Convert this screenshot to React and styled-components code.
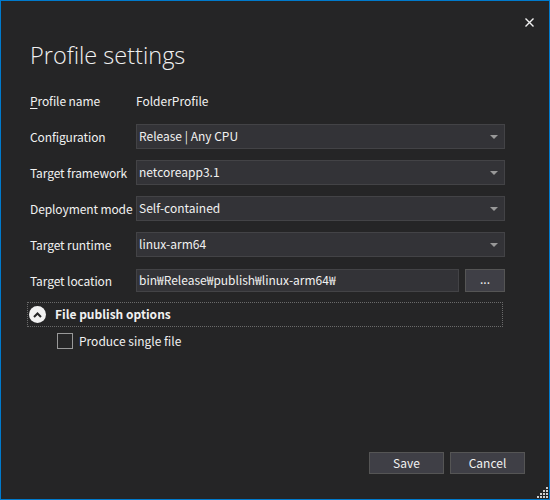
import styled, { createGlobalStyle } from "styled-components";

const GlobalStyle = createGlobalStyle`
  html, body {
    margin: 0;
    padding: 0;
    background: #252526;
  }
  * {
    box-sizing: border-box;
  }
`;

const Window = styled.div`
  position: relative;
  width: 550px;
  height: 500px;
  border: 1px solid #007acc;
  background: #252526;
  color: #f1f1f1;
  font-family: "Noto Sans CJK KR", "Noto Sans", sans-serif;
  font-size: 12px;
  display: flex;
  flex-direction: column;
`;

const Header = styled.div`
  display: flex;
  justify-content: flex-end;
  padding: 14px 15px 0 0;
  height: 24px;
`;

const CloseButton = styled.button`
  width: 9px;
  height: 9px;
  padding: 0;
  border: none;
  background: none;
  cursor: pointer;
  display: block;
`;

const Title = styled.h1`
  margin: 0;
  padding: 13px 0 0 29px;
  font-family: "Open Sans", "Liberation Sans", sans-serif;
  font-weight: 300;
  font-size: 23.5px;
  line-height: 34px;
  color: #f1f1f1;
`;

const Content = styled.div`
  flex: 1;
  padding: 16px 44px 0 29px;
`;

const Form = styled.div`
  display: grid;
  grid-template-columns: 106px 1fr;
  grid-auto-rows: 25px;
  row-gap: 11px;
  align-items: center;
`;

const Label = styled.label`
  white-space: nowrap;
  line-height: 23px;
  letter-spacing: -0.1px;
`;

const AccessKey = styled.span`
  text-decoration: underline;
  text-underline-offset: 2px;
`;

const Value = styled.div`
  line-height: 23px;
`;

const Select = styled.div`
  height: 25px;
  display: flex;
  align-items: center;
  justify-content: space-between;
  padding: 0 6px 2px 2px;
  background: #333337;
  border: 1px solid #434346;
`;

const Caret = styled.span`
  width: 0;
  height: 0;
  margin-top: 2px;
  border-left: 4px solid transparent;
  border-right: 4px solid transparent;
  border-top: 4px solid #999999;
`;

const LocationRow = styled.div`
  display: flex;
  gap: 6px;
  height: 23px;
`;

const TextInput = styled.div`
  flex: 1;
  display: flex;
  align-items: center;
  padding: 0 2px 2px;
  background: #333337;
  border: 1px solid #434346;
`;

const BrowseButton = styled.button`
  width: 40px;
  height: 23px;
  background: #3f3f46;
  border: 1px solid #555555;
  color: #f1f1f1;
  font: inherit;
  padding: 0 0 4px;
  line-height: 1;
`;

const Expander = styled.div`
  margin: 9px 2px 0 -3px;
  height: 25px;
  border: 1px dotted #6a6a6a;
  display: flex;
  align-items: center;
  gap: 9px;
  padding: 0 0 2px 1px;
  font-weight: bold;
`;

const ExpandIcon = styled.span`
  width: 17px;
  height: 17px;
  margin-top: 2px;
  border-radius: 50%;
  background: #f1f1f1;
  display: flex;
  align-items: center;
  justify-content: center;
`;

const CheckRow = styled.label`
  display: flex;
  align-items: center;
  gap: 6px;
  margin: 6px 0 0 27px;
  line-height: 16px;
`;

const CheckBox = styled.span`
  width: 16px;
  height: 16px;
  border: 1px solid #999999;
  background: #252526;
`;

const Footer = styled.div`
  display: flex;
  justify-content: flex-end;
  gap: 6px;
  padding: 0 24px 25px 0;
`;

const Button = styled.button`
  width: 75px;
  height: 22px;
  background: #3f3f46;
  border: 1px solid #555555;
  color: #f1f1f1;
  font: inherit;
  padding: 0 0 2px;
`;

const Grip = styled.svg`
  position: absolute;
  right: 0;
  bottom: 0;
`;

const fields = [
  { label: "Configuration", value: "Release | Any CPU" },
  { label: "Target framework", value: "netcoreapp3.1" },
  { label: "Deployment mode", value: "Self-contained" },
  { label: "Target runtime", value: "linux-arm64" },
];

function GripDots() {
  const dots = [];
  for (let r = 0; r < 4; r++) {
    for (let c = 3 - r; c < 4; c++) {
      dots.push(<rect key={`${r}-${c}`} x={c * 3} y={r * 3} width="2" height="2" fill="#d0d0d0" />);
    }
  }
  return (
    <Grip width="12" height="12" viewBox="0 0 12 12">
      {dots}
    </Grip>
  );
}

export default function App() {
  return (
    <>
      <GlobalStyle />
      <Window>
        <Header>
          <CloseButton aria-label="Close">
            <svg width="9" height="9" viewBox="0 0 9 9">
              <path d="M0.5 0.5 L8.5 8.5 M8.5 0.5 L0.5 8.5" stroke="#f1f1f1" strokeWidth="1.4" />
            </svg>
          </CloseButton>
        </Header>
        <Title>Profile settings</Title>
        <Content>
          <Form>
            <Label>
              <AccessKey>P</AccessKey>rofile name
            </Label>
            <Value>FolderProfile</Value>
            {fields.map((f) => [
              <Label key={f.label}>{f.label}</Label>,
              <Select key={f.label + "-v"}>
                <span>{f.value}</span>
                <Caret />
              </Select>,
            ])}
            <Label>Target location</Label>
            <LocationRow>
              <TextInput>bin₩Release₩publish₩linux-arm64₩</TextInput>
              <BrowseButton>...</BrowseButton>
            </LocationRow>
          </Form>
          <Expander>
            <ExpandIcon>
              <svg width="9" height="6" viewBox="0 0 9 6">
                <path d="M1 5 L4.5 1.5 L8 5" fill="none" stroke="#252526" strokeWidth="2" />
              </svg>
            </ExpandIcon>
            File publish options
          </Expander>
          <CheckRow>
            <CheckBox />
            Produce single file
          </CheckRow>
        </Content>
        <Footer>
          <Button>Save</Button>
          <Button>Cancel</Button>
        </Footer>
        <GripDots />
      </Window>
    </>
  );
}
